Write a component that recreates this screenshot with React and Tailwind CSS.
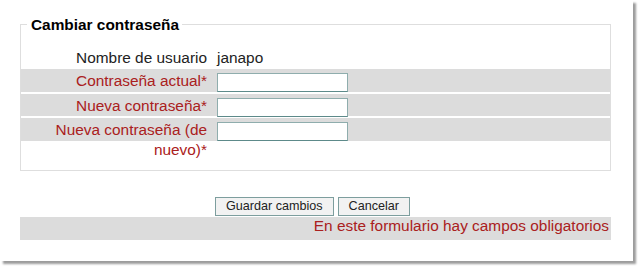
export default function App() {
  const red = "text-[#aa2020]";
  return (
    <div className="w-[640px] h-[269px] bg-white font-['Liberation_Sans',Arial,sans-serif] text-[15.4px]">
      <div className="w-[633px] h-[261px] bg-white shadow-[3px_3px_2px_#9c9c9c] pt-[16px] pl-[20px]">
        <fieldset className="w-[591px] border border-[#dedede] p-0 m-0">
          <legend className="ml-[6px] pl-[4px] pr-[3px] text-[15.4px] leading-[17px] font-bold text-black">
            Cambiar contraseña
          </legend>
          <div className="pt-[13px]">
            <div className="flex h-[23px]">
              <div className="w-[186px] shrink-0 text-right pt-[2px] leading-[20px] text-[#222]">Nombre de usuario</div>
              <div className="ml-[10px] pt-[2px] leading-[20px] text-[#222]">janapo</div>
            </div>
            <div className="flex h-[23px] bg-[#dcdcdc]">
              <div className={`w-[186px] shrink-0 text-right pt-[2px] leading-[20px] ${red}`}>Contraseña actual*</div>
              <input type="password" className="ml-[10px] mt-[4px] h-[19px] w-[131px] bg-white border border-[#8fadad] border-b-[#5d8a8a] outline-none" />
            </div>
            <div className="flex h-[22px] mt-[2px] bg-[#dcdcdc]">
              <div className={`w-[186px] shrink-0 text-right pt-[2px] leading-[20px] ${red}`}>Nueva contraseña*</div>
              <input type="password" className="ml-[10px] mt-[4px] h-[19px] w-[131px] bg-white border border-[#8fadad] border-b-[#5d8a8a] outline-none" />
            </div>
            <div className="flex h-[23px] mt-[2px] bg-[#dcdcdc]">
              <div className={`w-[186px] shrink-0 text-right pt-[2px] leading-[20px] ${red}`}>Nueva contraseña (de nuevo)*</div>
              <input type="password" className="ml-[10px] mt-[4px] h-[19px] w-[131px] bg-white border border-[#8fadad] border-b-[#5d8a8a] outline-none" />
            </div>
            <div className="h-[29px]" />
          </div>
        </fieldset>
        <div className="w-[591px] mt-[26px] flex justify-center gap-[4px] pr-[6px]">
          <button className="h-[19px] px-[10px] text-[12.6px] leading-[17px] text-[#222] bg-[#f2f2f2] border border-[#7d9e9e]">
            Guardar cambios
          </button>
          <button className="h-[19px] px-[10px] text-[12.6px] leading-[17px] text-[#222] bg-[#f2f2f2] border border-[#7d9e9e]">
            Cancelar
          </button>
        </div>
        <div className={`w-[591px] h-[23px] mt-[1px] bg-[#dcdcdc] text-right pr-[2px] leading-[17px] ${red}`}>
          En este formulario hay campos obligatorios
        </div>
      </div>
    </div>
  );
}
